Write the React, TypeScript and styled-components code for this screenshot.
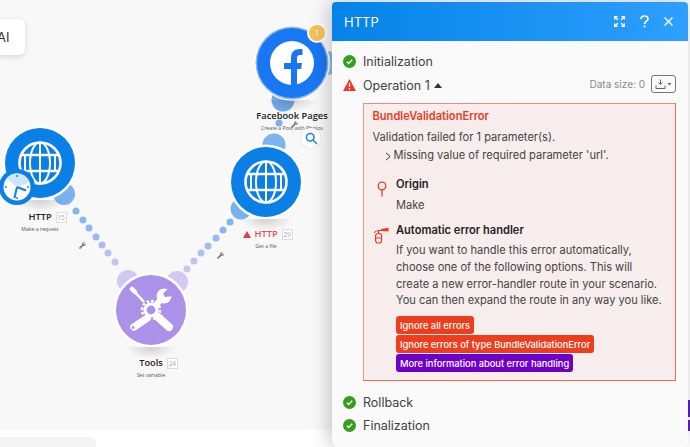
import React from 'react';
import styled, { createGlobalStyle } from 'styled-components';
import { FaWrench } from 'react-icons/fa';

const GlobalStyle = createGlobalStyle`
  html, body {
    margin: 0;
    padding: 0;
    background: #f8f8f8;
    overflow: hidden;
  }
`;

const Stage = styled.div`
  position: relative;
  width: 690px;
  height: 447px;
  overflow: hidden;
  background: #f8f8f8;
  font-family: Inter, "Liberation Sans", sans-serif;
`;

const Routes = styled.svg`
  position: absolute;
  left: 0;
  top: 0;
`;

const AiChip = styled.div`
  position: absolute;
  left: -30px;
  top: 19px;
  width: 55px;
  height: 36px;
  box-sizing: border-box;
  padding-left: 27px;
  display: flex;
  align-items: center;
  background: #fff;
  border-radius: 6px;
  box-shadow: 0 2px 6px rgba(0, 0, 0, 0.12);
  font-size: 13px;
  color: #333;
`;

const BottomBar = styled.div`
  position: absolute;
  left: 0;
  right: 0;
  top: 430px;
  bottom: 0;
  background: #fff;
`;

const BottomChip = styled.div`
  position: absolute;
  left: -8px;
  top: 437px;
  width: 104px;
  height: 20px;
  background: #f3f4f6;
  border-radius: 5px;
`;

const EdgeMark = styled.div<{ $top: number; $height: number }>`
  position: absolute;
  left: 688px;
  width: 4px;
  top: ${p => p.$top}px;
  height: ${p => p.$height}px;
  background: #5a1fc0;
`;

const Node = styled.div<{ $x: number; $y: number; $color: string; $halo?: boolean }>`
  position: absolute;
  left: ${p => p.$x - 35}px;
  top: ${p => p.$y - 35}px;
  width: 70px;
  height: 70px;
  border-radius: 50%;
  background: ${p => p.$color};
  box-shadow: ${p => (p.$halo
    ? '0 0 0 1.5px #8fb9ee, 0 0 0 3px #fff'
    : '0 0 0 2.5px #fff')};
  display: flex;
  align-items: center;
  justify-content: center;

  &::after {
    content: '';
    position: absolute;
    left: 9px;
    top: 72px;
    width: 52px;
    height: 12px;
    background: radial-gradient(ellipse at 50% 0, rgba(0, 0, 0, 0.16), rgba(0, 0, 0, 0) 70%);
  }
`;

const Label = styled.div<{ $x: number; $y: number }>`
  position: absolute;
  left: ${p => p.$x - 70}px;
  top: ${p => p.$y}px;
  width: 140px;
  display: flex;
  flex-direction: column;
  align-items: center;
  font-family: "Open Sans", "Noto Sans", sans-serif;
`;

const LabelName = styled.div<{ $error?: boolean }>`
  position: relative;
  font-size: 9.3px;
  line-height: 14px;
  font-weight: 600;
  color: ${p => (p.$error ? '#ee4a58' : '#222')};
  white-space: nowrap;
`;

const ModuleId = styled.span`
  position: absolute;
  left: calc(100% + 4px);
  top: 2px;
  width: 9px;
  height: 9px;
  border: 1px solid #ddd;
  background: #fff;
  font-size: 6.5px;
  font-weight: 400;
  line-height: 9px;
  text-align: center;
  color: #aaa;
`;

const WarnMark = styled.svg`
  position: absolute;
  right: calc(100% + 3px);
  top: 4px;
`;

const LabelSub = styled.div`
  font-size: 5.2px;
  line-height: 8px;
  margin-top: 1px;
  color: #555;
  white-space: nowrap;
`;

const CountBadge = styled.div`
  position: absolute;
  left: 309px;
  top: 25px;
  width: 16px;
  height: 16px;
  border-radius: 50%;
  background: #f5c15c;
  box-shadow: 0 0 0 2px #fff;
  display: flex;
  align-items: center;
  justify-content: center;
  font-size: 7px;
  color: #fff;
`;

const InspectBubble = styled.div`
  position: absolute;
  left: 301px;
  top: 128px;
  width: 20px;
  height: 20px;
  border-radius: 50%;
  background: #fff;
  box-shadow: 0 0 2px rgba(0, 0, 0, 0.15);
  display: flex;
  align-items: center;
  justify-content: center;
`;

const RouteTool = styled.div<{ $x: number; $y: number }>`
  position: absolute;
  left: ${p => p.$x}px;
  top: ${p => p.$y}px;
  display: flex;
  color: #7d7d7d;
  font-size: 7px;
`;

const Panel = styled.div`
  position: absolute;
  left: 332px;
  top: 2px;
  width: 356px;
  height: 445px;
  background: #fafafa;
  border-radius: 4px 4px 6px 6px;
  box-shadow: -4px 0 18px rgba(0, 0, 0, 0.2);
  display: flex;
  flex-direction: column;
  overflow: hidden;
`;

const PanelHeader = styled.div`
  flex: none;
  height: 39px;
  padding: 0 15px 0 12px;
  display: flex;
  align-items: center;
  justify-content: space-between;
  background: linear-gradient(90deg, #0583e8, #2d9fff);
  color: #fff;
`;

const PanelTitle = styled.div`
  font-size: 13px;
`;

const HeaderTools = styled.div`
  display: flex;
  align-items: center;
  gap: 14px;
`;

const PanelBody = styled.div`
  padding: 9px 12px 0 11px;
  display: flex;
  flex-direction: column;
`;

const StepRow = styled.div`
  height: 23.5px;
  display: flex;
  align-items: center;
  gap: 7px;
  font-size: 12.5px;
  color: #3f3f3f;
`;

const Caret = styled.span`
  width: 0;
  height: 0;
  margin-left: -3px;
  border-left: 4px solid transparent;
  border-right: 4px solid transparent;
  border-bottom: 5px solid #333;
`;

const DataSize = styled.div`
  margin: -2px 0 0 auto;
  display: flex;
  align-items: center;
  gap: 6px;
  font-size: 10px;
  color: #8a8a8a;
`;

const DataButton = styled.div`
  width: 23px;
  height: 16px;
  border: 1px solid #777;
  border-radius: 3px;
  display: flex;
  align-items: center;
  justify-content: center;
`;

const ErrorBox = styled.div`
  margin: 6px 0 10px 20px;
  height: 277.5px;
  box-sizing: border-box;
  padding: 4.25px 8px 0 8.5px;
  background: #f7eded;
  border: 1px solid #ee6a54;
  border-left-color: #f29284;
  border-top-color: #f08a78;
  font-size: 11.1px;
  line-height: 17.5px;
  color: #444;
`;

const ErrorTitle = styled.div`
  font-weight: 600;
  color: #ee3a1c;
  margin-bottom: 3px;
`;

const ErrorDetail = styled.div`
  margin-top: 1px;
  padding-left: 12px;
  display: flex;
  align-items: center;
  gap: 3px;
`;

const Section = styled.div<{ $gap: number }>`
  margin-top: ${p => p.$gap}px;
  display: grid;
  grid-template-columns: 23.5px 1fr;
`;

const SectionIcon = styled.div`
  padding: 5px 5px 0 0;
  display: flex;
  justify-content: center;
  align-items: flex-start;
`;

const SectionTitle = styled.div<{ $tight?: boolean }>`
  font-weight: 600;
  color: #222;
  margin-bottom: ${p => (p.$tight ? 2.5 : 3)}px;
`;

const SectionText = styled.div`
  line-height: 16.6px;
  white-space: nowrap;
`;

const ActionList = styled.div`
  margin-top: 7.7px;
  display: flex;
  flex-direction: column;
  align-items: flex-start;
  gap: 1px;
`;

const ActionButton = styled.div<{ $purple?: boolean }>`
  height: 18px;
  padding: 0 4px;
  border-radius: 3px;
  display: flex;
  align-items: center;
  background: ${p => (p.$purple ? '#6c00c9' : '#ee3d1c')};
  color: #fff;
  font-size: 9.3px;
  font-weight: 500;
  white-space: nowrap;
`;

const leftRoute = [
  [76, 211, '#86b8ee'], [83, 220, '#88b8ee'], [89, 228, '#8fb8ee'], [96, 237, '#9ab9ee'],
  [102, 245, '#a8bfee'], [108, 253, '#b8c2ef'], [115, 262, '#c6c4ef']
] as const;

const rightRoute = [
  [230, 222, '#7cb6ef'], [223, 230, '#88b8ee'], [216, 238, '#95baee'], [208, 246, '#a3bdee'],
  [201, 253, '#b0c0ef'], [194, 261, '#bcc3ef'], [187, 269, '#c8c5ef']
] as const;

const Globe = () => (
  <svg width="46" height="46" viewBox="-23 -23 46 46" fill="none" stroke="#fff">
    <circle r="20.5" strokeWidth="2.6" />
    <ellipse rx="10" ry="20.5" strokeWidth="2" />
    <path d="M0 -20.5V20.5" strokeWidth="2" />
    <path d="M-19 -8H19M-19 8H19" strokeWidth="2.4" />
    <path d="M-15 -8V8M15 -8V8" strokeWidth="2" />
  </svg>
);

const FacebookMark = () => (
  <svg width="44" height="44" viewBox="0 0 44 44">
    <circle cx="22" cy="22" r="22" fill="#fff" />
    <path
      d="M21 44V28H14V22H21V17C21 11 24.5 8 29.5 8H32.5V14H30C28 14 27 15 27 17V22H32L31 28H27V44Z"
      fill="#1877f2"
    />
  </svg>
);

const ToolsMark = () => (
  <svg width="48" height="48" viewBox="-24 -24 48 48" fill="none" stroke="#fff" strokeLinecap="round">
    <path d="M-17 -19L-7 -8" strokeWidth="2.6" strokeLinecap="butt" />
    <path d="M-19 -21L-16 -18" strokeWidth="4.5" />
    <path d="M7 7L18 17" strokeWidth="8" />
    <path d="M-5 9L-17 17" strokeWidth="7.5" />
    <circle cx="-18" cy="17.5" r="1.4" fill="#ab92e8" stroke="none" />
    <path d="M5 -5L11 -12" strokeWidth="6" strokeLinecap="butt" />
    <circle cx="13" cy="-14" r="7.5" fill="#fff" stroke="none" />
    <path d="M12 -16.5L20 -24L25 -14L14 -13Z" fill="#ab92e8" stroke="none" />
    <circle r="6" fill="#ab92e8" strokeWidth="3.2" />
    <circle r="9" strokeWidth="2.6" strokeDasharray="2.6 2.1" strokeLinecap="butt" />
  </svg>
);

const ClockBadge = styled(({ className }: { className?: string }) => (
  <svg className={className} width="38" height="38" viewBox="0 0 38 38">
    <circle cx="19" cy="19" r="18" fill="#0a7fe6" />
    <circle cx="19" cy="19" r="13.5" fill="#fff" />
    <path d="M19 19L8.5 10.5A13.5 13.5 0 0 1 19 5.5A13.5 13.5 0 0 1 31.5 14Z" fill="#cfe5fa" />
    <path d="M19 19L16.5 30M19 19L28 22.5" stroke="#0a7fe6" strokeWidth="2" />
    <circle cx="19" cy="8" r="0.9" fill="#0a7fe6" />
    <circle cx="30" cy="19" r="0.9" fill="#0a7fe6" />
    <circle cx="8" cy="19" r="0.9" fill="#0a7fe6" />
    <circle cx="19" cy="30" r="0.9" fill="#0a7fe6" />
  </svg>
))`
  position: absolute;
  left: -2px;
  top: 168px;
`;

const StepOk = () => (
  <svg width="13" height="13" viewBox="0 0 13 13">
    <circle cx="6.5" cy="6.5" r="6.5" fill="#34a01a" />
    <path d="M3.8 6.8L5.6 8.5L9.2 4.8" fill="none" stroke="#fff" strokeWidth="1.4" />
  </svg>
);

const StepWarn = () => (
  <svg width="13" height="12" viewBox="0 0 13 12">
    <path d="M6.5 0L13 12H0Z" fill="#ee3a24" />
    <path d="M6.5 4V8M6.5 9V10.5" stroke="#fff" strokeWidth="1.3" />
  </svg>
);

const App = () => {
  return (
    <Stage>
      <GlobalStyle />
      <BottomBar />
      <BottomChip />
      <EdgeMark $top={400} $height={17} />
      <EdgeMark $top={420} $height={11} />
      <AiChip>AI</AiChip>

      <Routes width="690" height="447">
        <circle cx="64" cy="194" r="11" fill="#79b3ee" />
        <circle cx="283" cy="100" r="11.5" fill="#72a9e8" />
        <circle cx="274" cy="145" r="11.5" fill="#7ab5ef" />
        <circle cx="241" cy="209" r="10.5" fill="#79b3ee" />
        <circle cx="128" cy="281" r="11" fill="#d3c8f1" />
        <circle cx="177" cy="282" r="11" fill="#d3c8f1" />
        <circle cx="327" cy="63" r="12" fill="#8fb9ee" />
        <circle cx="279" cy="123" r="3.5" fill="#7fb0ea" />
        <circle cx="302" cy="151" r="3.5" fill="#fff" stroke="#e4e4e4" strokeWidth="0.5" />
        <circle cx="296" cy="155" r="2" fill="#fff" stroke="#e4e4e4" strokeWidth="0.5" />
        {leftRoute.map(([x, y, fill]) => (
          <circle key={`${x}-${y}`} cx={x} cy={y} r="3.5" fill={fill} />
        ))}
        {rightRoute.map(([x, y, fill]) => (
          <circle key={`${x}-${y}`} cx={x} cy={y} r="3.5" fill={fill} />
        ))}
      </Routes>

      <Node $x={40} $y={163} $color="#0a7fe6"><Globe /></Node>
      <ClockBadge />
      <Label $x={40} $y={210}>
        <LabelName>HTTP<ModuleId>15</ModuleId></LabelName>
        <LabelSub>Make a request</LabelSub>
      </Label>

      <Node $x={292} $y={63} $color="#1877f2" $halo><FacebookMark /></Node>
      <CountBadge>1</CountBadge>
      <Label $x={292} $y={109}>
        <LabelName>Facebook Pages<ModuleId>7</ModuleId></LabelName>
        <LabelSub>Create a Post with Photos</LabelSub>
      </Label>

      <Node $x={266} $y={182} $color="#0a7fe6"><Globe /></Node>
      <Label $x={266} $y={227}>
        <LabelName $error>
          <WarnMark width="8" height="7" viewBox="0 0 8 7">
            <path d="M4 0L8 7H0Z" fill="#ee3a48" />
          </WarnMark>
          HTTP<ModuleId>29</ModuleId>
        </LabelName>
        <LabelSub>Get a file</LabelSub>
      </Label>

      <Node $x={151} $y={310} $color="#ab92e8"><ToolsMark /></Node>
      <Label $x={151} $y={356}>
        <LabelName>Tools<ModuleId>24</ModuleId></LabelName>
        <LabelSub>Set variable</LabelSub>
      </Label>

      <RouteTool $x={79} $y={242}><FaWrench /></RouteTool>
      <RouteTool $x={217} $y={252}><FaWrench /></RouteTool>
      <RouteTool $x={291} $y={121}><FaWrench /></RouteTool>

      <InspectBubble>
        <svg width="13" height="13" viewBox="0 0 13 13" fill="none" stroke="#1a86d8" strokeWidth="1.5">
          <circle cx="5.2" cy="5.2" r="3.8" />
          <path d="M8 8L12 12" />
        </svg>
      </InspectBubble>

      <Panel>
        <PanelHeader>
          <PanelTitle>HTTP</PanelTitle>
          <HeaderTools>
            <svg width="11" height="11" viewBox="0 0 11 11" fill="none" stroke="#fff" strokeWidth="1.4">
              <path d="M0.7 3.5V0.7H3.5M7.5 0.7H10.3V3.5M10.3 7.5V10.3H7.5M3.5 10.3H0.7V7.5" />
              <path d="M1 1L4 4M10 1L7 4M10 10L7 7M1 10L4 7" />
            </svg>
            <svg width="11" height="13" viewBox="0 0 11 13" fill="none" stroke="#fff" strokeWidth="1.7">
              <path d="M2 4C2 2 3.5 1 5.5 1C7.5 1 9 2.2 9 4C9 6.2 5.5 6.2 5.5 9" />
              <path d="M5.5 10.5V12.5" />
            </svg>
            <svg width="9" height="9" viewBox="0 0 9 9" fill="none" stroke="#fff" strokeWidth="1.4">
              <path d="M0.5 0.5L8.5 8.5M8.5 0.5L0.5 8.5" />
            </svg>
          </HeaderTools>
        </PanelHeader>
        <PanelBody>
          <StepRow><StepOk />Initialization</StepRow>
          <StepRow>
            <StepWarn />
            Operation 1
            <Caret />
            <DataSize>
              Data size: 0
              <DataButton>
                <svg width="17" height="11" viewBox="0 0 17 11" fill="none" stroke="#666" strokeWidth="1">
                  <path d="M5.5 0.5V5M3.5 3.5L5.5 5.5L7.5 3.5M1 6.5V9.5H10V6.5" />
                  <path d="M12.5 4H16.5L14.5 6.5Z" fill="#666" stroke="none" />
                </svg>
              </DataButton>
            </DataSize>
          </StepRow>

          <ErrorBox>
            <ErrorTitle>BundleValidationError</ErrorTitle>
            <div>Validation failed for 1 parameter(s).</div>
            <ErrorDetail>
              <svg width="6" height="9" viewBox="0 0 6 9" fill="none" stroke="#333" strokeWidth="1">
                <path d="M1 0.8L5 4.5L1 8.2" />
              </svg>
              Missing value of required parameter 'url'.
            </ErrorDetail>

            <Section $gap={11.5}>
              <SectionIcon>
                <svg width="10" height="16" viewBox="0 0 10 16" fill="none" stroke="#ee3a1c" strokeWidth="1.3">
                  <circle cx="5" cy="5" r="3.8" />
                  <path d="M5 9V15.5" />
                </svg>
              </SectionIcon>
              <div>
                <SectionTitle>Origin</SectionTitle>
                <SectionText>Make</SectionText>
              </div>
            </Section>

            <Section $gap={9}>
              <SectionIcon>
                <svg width="17" height="17" viewBox="0 0 17 17" fill="none" stroke="#ee3a1c" strokeWidth="1.2">
                  <rect x="2.6" y="6.5" width="6" height="9.5" rx="2.5" />
                  <path d="M2.6 11H8.6" />
                  <path d="M5.6 6.5V3.5H10M5.6 3.5C3 3.5 2 4.5 1 6" />
                  <path d="M8 2L15.5 0.8V4.5L9 4Z" fill="#ee3a1c" stroke="none" />
                </svg>
              </SectionIcon>
              <div>
                <SectionTitle $tight>Automatic error handler</SectionTitle>
                <SectionText>
                  If you want to handle this error automatically,<br />
                  choose one of the following options. This will<br />
                  create a new error-handler route in your scenario.<br />
                  You can then expand the route in any way you like.
                </SectionText>
                <ActionList>
                  <ActionButton>Ignore all errors</ActionButton>
                  <ActionButton>Ignore errors of type BundleValidationError</ActionButton>
                  <ActionButton $purple>More information about error handling</ActionButton>
                </ActionList>
              </div>
            </Section>
          </ErrorBox>

          <StepRow><StepOk />Rollback</StepRow>
          <StepRow><StepOk />Finalization</StepRow>
        </PanelBody>
      </Panel>
    </Stage>
  );
};

export default App;
